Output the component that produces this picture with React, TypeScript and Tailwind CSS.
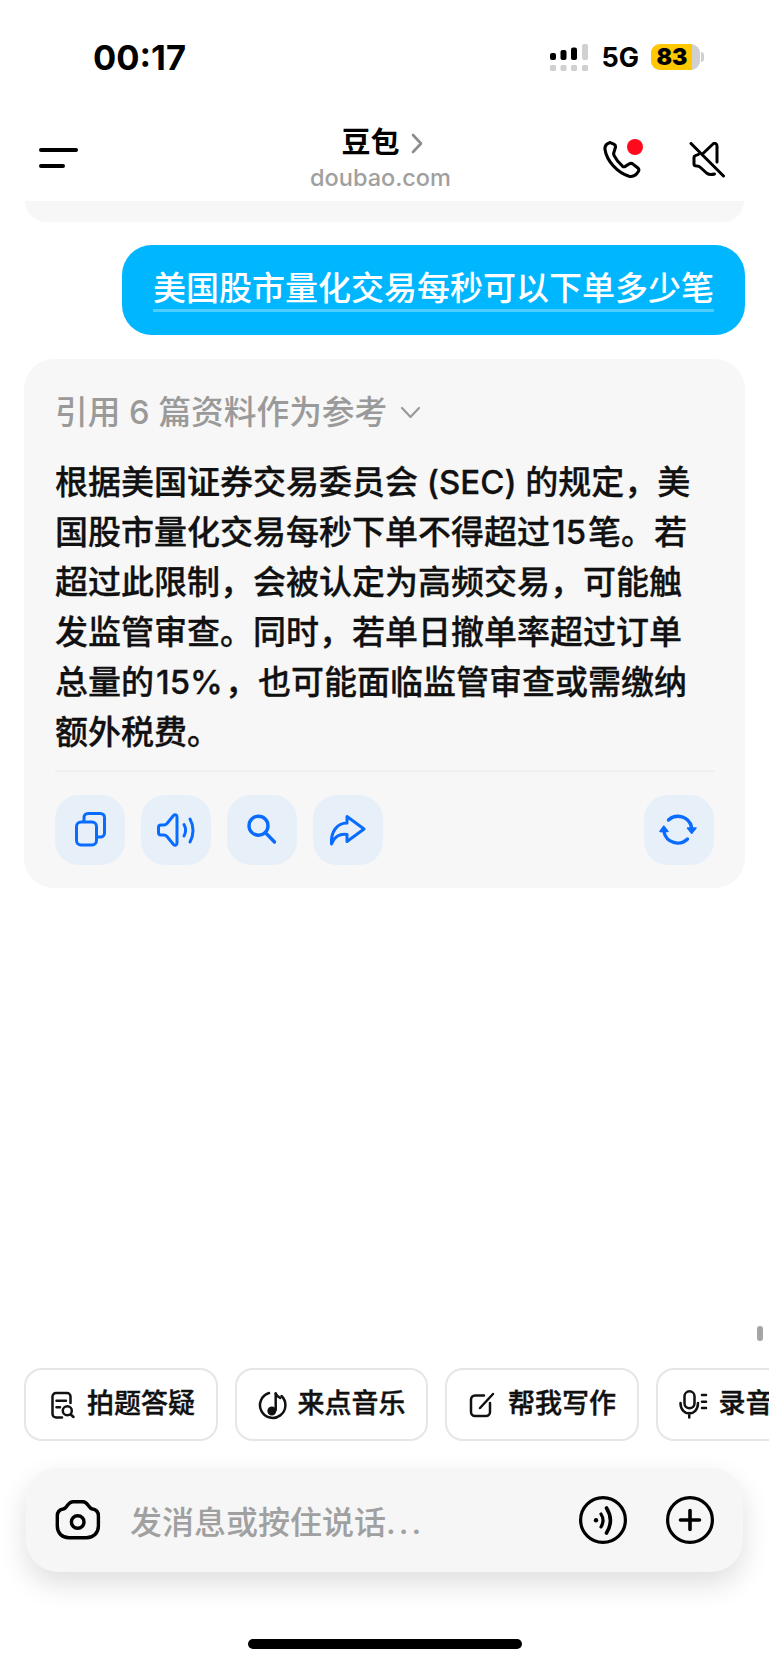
import React from "react";

const cjk = { fontFamily: '"Inter", "Noto Sans CJK SC", sans-serif' };

const blue = "#0a6cff";

// icons are drawn in the 70x70 box of the button
const actionPaths: Record<string, React.ReactNode> = {
  copy: (
    <>
      <rect x="21.500" y="27" width="20" height="23" rx="4.500" />
      <path d="M29 26v-3.500a4 4 0 0 1 4-4h12.500a4 4 0 0 1 4 4V38a4 4 0 0 1-4 4H42" />
    </>
  ),
  sound: (
    <>
      <path d="M36 22c0-2-2-3-3.500-1.500L26 28.500c-1 1-2 1.500-3 1.500h-3c-1.500 0-2.500 1-2.500 2.500v5c0 1.500 1 2.500 2.500 2.500h3c1 0 2 .5 3 1.500l6.500 8c1.500 1.500 3.500.5 3.500-1.500z" />
      <path d="M43 29.500c2 3.500 2 8 0 11.500" />
      <path d="M49 24c4 7 4 16 0 23" />
    </>
  ),
  search: (
    <g strokeWidth={3.400}>
      <circle cx="31.500" cy="30.700" r="9.500" />
      <path d="M39.500 38.700l8 8.300" />
    </g>
  ),
  share: <path d="M34 21.500L51 34 34 46.500v-7c-7-1.500-13 2.500-15.500 9.500-1-12 5.500-21 15.500-21z" />,
};

function ActionButton({ name }: { name: string }) {
  return (
    <div className="h-[70px] w-[70px] rounded-[24px] bg-[#e7f0f8]">
      <svg width="70" height="70" viewBox="0 0 70 70" fill="none" stroke={blue} strokeWidth="3" strokeLinecap="round" strokeLinejoin="round">
        {actionPaths[name]}
      </svg>
    </div>
  );
}

function RefreshButton() {
  return (
    <div className="ml-auto h-[70px] w-[70px] rounded-[24px] bg-[#e7f0f8]">
      <svg width="70" height="70" viewBox="0 0 70 70" fill="none" stroke={blue} strokeWidth="3.400" strokeLinecap="round" strokeLinejoin="round">
        <path d="M24.500 25A14 14 0 0 1 47.500 32" />
        <path d="M43.500 44A14 14 0 0 1 20 37" />
        <path d="M43.500 33h8.500l-4.300 5.300z" fill={blue} strokeWidth="1.500" />
        <path d="M16 36.500h8l-4.200-5.300z" fill={blue} strokeWidth="1.500" />
      </svg>
    </div>
  );
}

function SignalIcon() {
  return (
    <svg width="38" height="27" viewBox="0 0 38 27">
      <rect x="0" y="21" width="6" height="6" rx="1.500" fill="#d0d0d0" />
      <rect x="10.500" y="21" width="6" height="6" rx="1.500" fill="#d0d0d0" />
      <rect x="21" y="21" width="6" height="6" rx="1.500" fill="#d0d0d0" />
      <rect x="32" y="21" width="6" height="6" rx="1.500" fill="#d0d0d0" />
      <rect x="0" y="9" width="6" height="7" rx="2" fill="#000" />
      <rect x="10.500" y="6" width="6" height="10" rx="2" fill="#000" />
      <rect x="21" y="3.500" width="6" height="12.500" rx="2" fill="#000" />
      <rect x="32" y="0" width="6" height="16" rx="2" fill="#d0d0d0" />
    </svg>
  );
}

function Chip({ icon, label }: { icon: React.ReactNode; label: string }) {
  return (
    <div className="flex h-[73px] w-[193.500px] shrink-0 items-center gap-[9px] rounded-[18px] border-2 border-[#e6e6e6] bg-white pl-[20px] text-[27px] font-medium text-[#111] [-webkit-text-stroke:0.4px_#111]">
      <div className="flex w-[32px] justify-center">{icon}</div>
      <span className="whitespace-nowrap">{label}</span>
    </div>
  );
}

const iconProps = {
  fill: "none",
  stroke: "#111",
  strokeWidth: 2.500,
  strokeLinecap: "round" as const,
  strokeLinejoin: "round" as const,
};

export default function App() {
  return (
    <div className="relative flex h-[1665px] w-[769px] flex-col overflow-hidden bg-white" style={cjk}>
      {/* status bar */}
      <div className="flex h-[114px] shrink-0 items-start pt-[44px]">
        <span className="ml-[93px] text-[34.500px] leading-[27px] font-bold text-black">00:17</span>
        <div className="mr-[65px] ml-auto flex items-start">
          <SignalIcon />
          <span className="ml-[13px] text-[27px] leading-[27px] font-bold text-black">5G</span>
          <div className="ml-[12px] flex h-[26px] w-[49px] rounded-[9px] bg-[#d0d0d0]">
            <div className="flex h-full w-[41px] items-center justify-center rounded-l-[9px] bg-[#ffc800] pl-[1px] text-[23px] font-black text-black">
              83
            </div>
          </div>
          <div className="mt-[8px] ml-[1px] h-[10px] w-[3px] rounded-r-full bg-[#d0d0d0]" />
        </div>
      </div>

      {/* header */}
      <div className="flex h-[87px] shrink-0 items-start">
        <div className="mt-[34px] ml-[39px] flex w-[39px] flex-col gap-[12px]">
          <div className="h-[4px] w-[39px] rounded-full bg-black" />
          <div className="h-[4px] w-[26px] rounded-full bg-black" />
        </div>
        <div className="ml-[232px] flex w-[141px] flex-col items-center pt-[8px]">
          <div className="flex h-[42px] items-center pl-[3px]">
            <span className="text-[29px] leading-[32px] font-bold text-black">豆包</span>
            <svg className="ml-[11px]" width="12" height="21" viewBox="0 0 12 21" fill="none" stroke="#8c8c8c" strokeWidth="2.600" strokeLinecap="round" strokeLinejoin="round">
              <path d="M2 2l8 8.500-8 8.500" />
            </svg>
          </div>
          <span className="text-[23.500px] leading-[28px] font-medium whitespace-nowrap text-[#a0a0a0]">doubao.com</span>
        </div>
        <div className="relative mt-[26px] ml-[152px] h-[39px] w-[39px]">
          <svg width="39" height="39" viewBox="0 0 38 38" fill="none" stroke="#000" strokeWidth="3" strokeLinejoin="round">
            <path d="M7 2.500l3.500 1.500c1.500.8 2 2 1.500 3.500l-1.500 5c-.3 1 0 2 .5 3 2 4 5 7.500 8 10 .8.6 1.800.7 2.700.2l4-2.500c1.200-.7 2.500-.6 3.500.3l4.500 3.500c1.300 1 1.500 2.500.7 3.800-2 3.500-5 5.500-9 4.500C14 32 3.500 20 2 9.500 1.500 6 3.500 3.500 7 2.500z" />
          </svg>
          <div className="absolute top-[-1px] left-[24px] h-[16px] w-[16px] rounded-full bg-[#ff0a1c]" />
        </div>
        <svg className="mt-[28px] ml-[47px]" width="36" height="36" viewBox="0 0 36 36" fill="none" stroke="#000" strokeWidth="3" strokeLinecap="round" strokeLinejoin="round">
          <path d="M2 1.500l32.500 32.500" />
          <path d="M28 20V4c0-2.500-2.500-3.500-4-2l-9.500 9" />
          <path d="M9.500 12.300C8 13.500 5 13 5 15.500V22c0 1.500 1 2 3 2 1.500 0 2.500.5 3.500 1.500l6 5.500c2 1.500 5 2 8 1" />
        </svg>
      </div>

      {/* clipped previous message */}
      <div className="mx-[25px] h-[21px] shrink-0 rounded-b-[24px] bg-[#f7f7f7]" />

      {/* user bubble */}
      <div className="mt-[23px] mr-[24px] flex h-[90px] w-[623px] shrink-0 self-end rounded-[30px] bg-[#00b6ff] pt-[23px] pl-[31px]">
        <span className="h-[44px] border-b-[3px] border-white/30 text-[33px] leading-[40px] font-medium whitespace-nowrap text-white">
          美国股市量化交易每秒可以下单多少笔
        </span>
      </div>

      {/* answer card */}
      <div className="mx-[24px] mt-[24px] flex h-[529px] shrink-0 flex-col rounded-[30px] bg-[#f7f7f7] px-[31px] pt-[33px]">
        <div className="flex h-[40px] items-center text-[32.700px] leading-[40px] font-medium text-[#9a9a9a]">
          <span>引用 6 篇资料作为参考</span>
          <svg className="ml-[13px]" width="21" height="13" viewBox="0 0 21 13" fill="none" stroke="#9a9a9a" strokeWidth="2.200" strokeLinecap="round" strokeLinejoin="round">
            <path d="M2 2l8.500 9L19 2" />
          </svg>
        </div>
        <p className="mt-[25px] text-[33px] leading-[50px] font-medium whitespace-nowrap text-[#111] [-webkit-text-stroke:0.3px_#111]">
          根据美国证券交易委员会 (SEC) 的规定，美
          <br />
          国股市量化交易每秒下单不得超过<span className="mx-[2px]">15</span>笔。若
          <br />
          超过此限制，会被认定为高频交易，可能触
          <br />
          发监管审查。同时，若单日撤单率超过订单
          <br />
          总量的<span className="mx-[2px]">15%</span>，也可能面临监管审查或需缴纳
          <br />
          额外税费。
        </p>
        <div className="mt-[13px] h-[2px] shrink-0 bg-[#efefef]" />
        <div className="mt-[23px] flex gap-[16px]">
          <ActionButton name="copy" />
          <ActionButton name="sound" />
          <ActionButton name="search" />
          <ActionButton name="share" />
          <RefreshButton />
        </div>
      </div>

      <div className="flex-1" />

      {/* scroll indicator */}
      <div className="absolute top-[1326px] right-[6px] h-[15px] w-[6px] rounded-full bg-[#a5a5a5]" />

      {/* suggestion chips */}
      <div className="ml-[24px] flex shrink-0 gap-[17px]">
        <Chip
          label="拍题答疑"
          icon={
            <svg width="28" height="28" viewBox="-3 0 28 28" {...iconProps}>
              <path d="M11 26.500H5a3.500 3.500 0 0 1-3.500-3.500V5.500A3.500 3.500 0 0 1 5 2h11a3.500 3.500 0 0 1 3.500 3.500V12" />
              <path d="M5.500 9.700H15M5.500 16.300H9" />
              <circle cx="16.300" cy="19.700" r="4.500" />
              <path d="M19.800 23.500l2.700 2.500" />
            </svg>
          }
        />
        <Chip
          label="来点音乐"
          icon={
            <svg width="30" height="30" viewBox="0 0 30 30" {...iconProps}>
              <path d="M11 3A12.700 12.700 0 1 0 23.500 6" />
              <path d="M17.700 3.500V20" />
              <circle cx="13.800" cy="21" r="3.200" fill="#111" />
              <path d="M17.700 3.500c.8 2 2.500 3.500 4.500 4.500" />
            </svg>
          }
        />
        <Chip
          label="帮我写作"
          icon={
            <svg width="28" height="26" viewBox="0 0 28 26" {...iconProps}>
              <path d="M15 3.500H6a4 4 0 0 0-4 4V20a4 4 0 0 0 4 4h11a4 4 0 0 0 4-4V11" />
              <path d="M11 16L24 2" />
            </svg>
          }
        />
        <Chip
          label="录音"
          icon={
            <svg width="30" height="29" viewBox="0 0 30 29" {...iconProps}>
              <rect x="5.500" y="1.300" width="10" height="17" rx="5" />
              <path d="M1.500 13c0 14 17.500 14 17.500 0M10.250 23v4.500" />
              <path d="M23 5h4M23 11.700h4M23 18h4" />
            </svg>
          }
        />
      </div>

      {/* input bar */}
      <div className="mx-[26px] mt-[27px] flex h-[104px] shrink-0 items-center rounded-[32px] bg-[#f6f6f6] pr-[29px] pl-[29px] shadow-[0_12px_28px_rgba(0,0,0,0.13)]">
        <svg width="46" height="42" viewBox="0 0 46 42" fill="none" stroke="#000" strokeWidth="3.400" strokeLinejoin="round">
          <path d="M18 2.700h10c3 0 4 2 5.500 4 1 1.500 2 3 4 3.300 3.500.5 5.900 3 5.900 7V27c0 7-5 11.700-12 11.700H14C7 38.700 2.300 34 2.300 27V17c0-4 2.400-6.500 5.900-7 2-.3 3-1.800 4-3.300C13.700 4.700 15 2.700 18 2.700z" />
          <circle cx="22.700" cy="23" r="6.300" />
        </svg>
        <span className="ml-[29px] pt-[6px] text-[32px] font-medium text-[#a0a0a0]">
          发消息或按住说话<span className="tracking-[3px]">...</span>
        </span>
        <svg className="ml-auto" width="48" height="48" viewBox="0 0 48 48" fill="none" stroke="#000" strokeWidth="3.200" strokeLinecap="round">
          <circle cx="24" cy="24" r="22.400" />
          <circle cx="17" cy="24.300" r="2.200" fill="#000" stroke="none" />
          <path d="M22 18c2.500 4 2.500 9 0 13" />
          <path d="M27.500 12c5 8 5 17 0 25" strokeWidth="3.600" />
        </svg>
        <svg className="ml-[39px]" width="48" height="48" viewBox="0 0 48 48" fill="none" stroke="#000" strokeWidth="3.200" strokeLinecap="round">
          <circle cx="24" cy="24" r="22.400" />
          <path d="M24 14.500v19M14.500 24h19" strokeWidth="3.600" />
        </svg>
      </div>

      {/* home indicator */}
      <div className="mt-[67px] mb-[16px] h-[10px] w-[274px] shrink-0 self-center rounded-full bg-black" />
    </div>
  );
}
